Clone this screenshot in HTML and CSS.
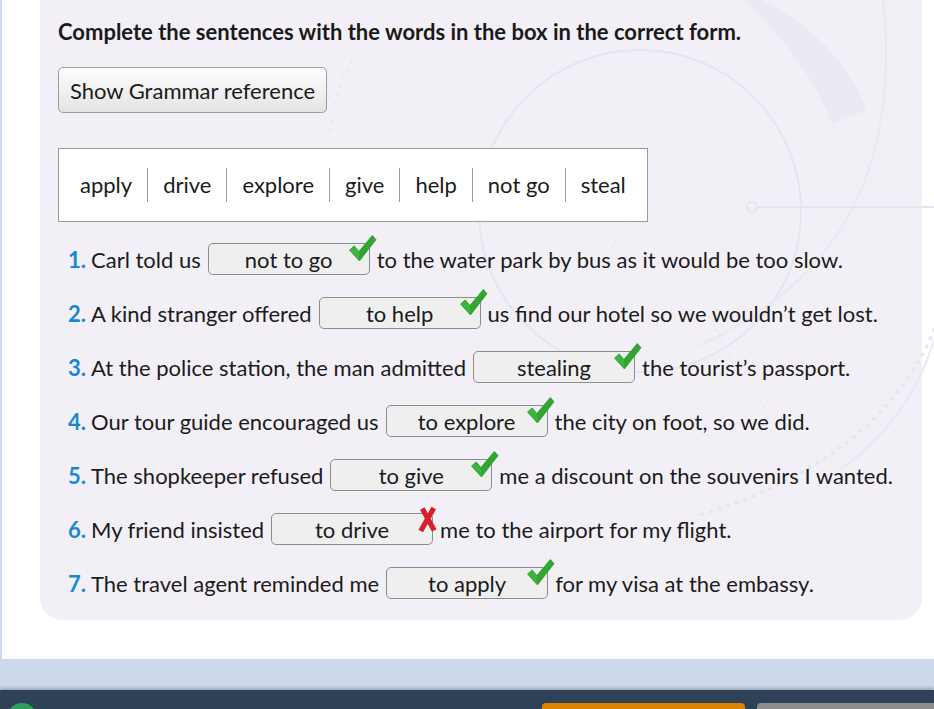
FILE: index.html
```html
<!DOCTYPE html>
<html lang="en">
<head>
<meta charset="utf-8">
<title>Exercise</title>
<link rel="stylesheet" href="styles.css">
</head>
<body>
<div class="page">
  <div class="card">
    <svg class="deco" width="894" height="620" viewBox="0 0 894 620" aria-hidden="true">
      <circle cx="600" cy="211" r="161" fill="none" stroke="#e3e6f2" stroke-width="2"/>
      <path d="M843 0 Q870 250 660 345" fill="none" stroke="#e7e9f4" stroke-width="2"/>
      <path d="M703 0 L722 0 Q800 40 827 110 L792 124 Q768 60 703 0 Z" fill="#eaeaf5"/>
      <line x1="717" y1="207" x2="894" y2="207" stroke="#e1e7f2" stroke-width="2"/>
      <circle cx="712" cy="207" r="5" fill="none" stroke="#e1e7f2" stroke-width="2"/>
      <path d="M570 250 Q585 225 600 205" fill="none" stroke="#e3e6f2" stroke-width="2" stroke-dasharray="0 5" stroke-linecap="round"/>
      <path d="M290 130 Q295 90 315 55" fill="none" stroke="#e6e8f3" stroke-width="3" stroke-dasharray="0 9" stroke-linecap="round"/>
      <path d="M670 317 Q700 380 735 420" fill="none" stroke="#e3e6f2" stroke-width="2" stroke-dasharray="0 5" stroke-linecap="round"/>
      <path d="M894 330 Q840 460 660 515" fill="none" stroke="#e3e6f2" stroke-width="4" stroke-dasharray="0 9" stroke-linecap="round"/>
      <path d="M894 340 Q870 420 800 470" fill="none" stroke="#e8e9f4" stroke-width="2"/>
    </svg>
    <div class="content">
      <h1 class="title">Complete the sentences with the words in the box in the correct form.</h1>
      <button class="grammar-btn" type="button">Show Grammar reference</button>
      <div class="wordbox">
        <span class="word">apply</span>
        <span class="word">drive</span>
        <span class="word">explore</span>
        <span class="word">give</span>
        <span class="word">help</span>
        <span class="word">not go</span>
        <span class="word">steal</span>
      </div>
      <ol class="items">
        <li class="item">
          <span class="num">1.</span><span class="txt">Carl told us</span>
          <span class="answer">not to go<svg class="mark check" viewBox="0 0 28 28" aria-hidden="true"><path d="M1.5 15.5 L6 11.5 L10.5 17 L23.5 1.5 L27 5.5 L11 26 Z" fill="#3cb53c" stroke="#2f9a2f" stroke-width="0.8" stroke-linejoin="round"/><path d="M10.5 17 L23.5 1.5 L27 5.5 L11 26 Z" fill="#33a533"/></svg></span>
          <span class="txt after">to the water park by bus as it would be too slow.</span>
        </li>
        <li class="item">
          <span class="num">2.</span><span class="txt">A kind stranger offered</span>
          <span class="answer">to help<svg class="mark check" viewBox="0 0 28 28" aria-hidden="true"><path d="M1.5 15.5 L6 11.5 L10.5 17 L23.5 1.5 L27 5.5 L11 26 Z" fill="#3cb53c" stroke="#2f9a2f" stroke-width="0.8" stroke-linejoin="round"/><path d="M10.5 17 L23.5 1.5 L27 5.5 L11 26 Z" fill="#33a533"/></svg></span>
          <span class="txt after">us find our hotel so we wouldn’t get lost.</span>
        </li>
        <li class="item">
          <span class="num">3.</span><span class="txt">At the police station, the man admitted</span>
          <span class="answer">stealing<svg class="mark check" viewBox="0 0 28 28" aria-hidden="true"><path d="M1.5 15.5 L6 11.5 L10.5 17 L23.5 1.5 L27 5.5 L11 26 Z" fill="#3cb53c" stroke="#2f9a2f" stroke-width="0.8" stroke-linejoin="round"/><path d="M10.5 17 L23.5 1.5 L27 5.5 L11 26 Z" fill="#33a533"/></svg></span>
          <span class="txt after">the tourist’s passport.</span>
        </li>
        <li class="item">
          <span class="num">4.</span><span class="txt">Our tour guide encouraged us</span>
          <span class="answer">to explore<svg class="mark check" viewBox="0 0 28 28" aria-hidden="true"><path d="M1.5 15.5 L6 11.5 L10.5 17 L23.5 1.5 L27 5.5 L11 26 Z" fill="#3cb53c" stroke="#2f9a2f" stroke-width="0.8" stroke-linejoin="round"/><path d="M10.5 17 L23.5 1.5 L27 5.5 L11 26 Z" fill="#33a533"/></svg></span>
          <span class="txt after">the city on foot, so we did.</span>
        </li>
        <li class="item">
          <span class="num">5.</span><span class="txt">The shopkeeper refused</span>
          <span class="answer">to give<svg class="mark check" viewBox="0 0 28 28" aria-hidden="true"><path d="M1.5 15.5 L6 11.5 L10.5 17 L23.5 1.5 L27 5.5 L11 26 Z" fill="#3cb53c" stroke="#2f9a2f" stroke-width="0.8" stroke-linejoin="round"/><path d="M10.5 17 L23.5 1.5 L27 5.5 L11 26 Z" fill="#33a533"/></svg></span>
          <span class="txt after">me a discount on the souvenirs I wanted.</span>
        </li>
        <li class="item">
          <span class="num">6.</span><span class="txt">My friend insisted</span>
          <span class="answer">to drive<svg class="mark cross" viewBox="0 0 18 26" aria-hidden="true"><path d="M4 2.5 L15.5 23.5 M15 2 L2.5 24" fill="none" stroke="#d8202b" stroke-width="5"/></svg></span>
          <span class="txt after">me to the airport for my flight.</span>
        </li>
        <li class="item">
          <span class="num">7.</span><span class="txt">The travel agent reminded me</span>
          <span class="answer">to apply<svg class="mark check" viewBox="0 0 28 28" aria-hidden="true"><path d="M1.5 15.5 L6 11.5 L10.5 17 L23.5 1.5 L27 5.5 L11 26 Z" fill="#3cb53c" stroke="#2f9a2f" stroke-width="0.8" stroke-linejoin="round"/><path d="M10.5 17 L23.5 1.5 L27 5.5 L11 26 Z" fill="#33a533"/></svg></span>
          <span class="txt after">for my visa at the embassy.</span>
        </li>
      </ol>
    </div>
  </div>
</div>
<div class="band"></div>
<div class="footer">
  <span class="avatar"></span>
  <span class="btn-orange"></span>
  <span class="btn-gray"></span>
</div>
</body>
</html>
```
FILE: styles.css
```css
* { box-sizing: border-box; }

html, body {
  margin: 0;
  padding: 0;
}

body {
  background: #cdd9ea;
  font-family: Lato, "Open Sans", "Liberation Sans", sans-serif;
  color: #1b1b1b;
  height: 709px;
  overflow: hidden;
}

.page {
  margin-left: 2px;
  height: 659px;
  background: #ffffff;
  padding: 0 12px 0 38px;
}

.card {
  position: relative;
  height: 620px;
  background: #f3eff6;
  border-radius: 0 0 22px 22px;
  padding: 19px 0 0 18px;
}

.deco {
  position: absolute;
  left: 0;
  top: 0;
  pointer-events: none;
}

.content {
  position: relative;
}

.title {
  margin: 0;
  font-size: 22px;
  line-height: 26px;
  font-weight: 700;
  color: #1a1a1a;
}

.grammar-btn {
  display: block;
  margin-top: 22px;
  height: 46px;
  width: 269px;
  padding: 0;
  font-family: inherit;
  font-size: 22px;
  color: #1b1b1b;
  background: linear-gradient(#fdfdfd, #e4e4e4);
  border: 1px solid #9c9c9c;
  border-radius: 5px;
}

.wordbox {
  display: inline-flex;
  align-items: center;
  margin-top: 35px;
  height: 74px;
  padding: 0 6px;
  background: #ffffff;
  border: 1px solid #9a9a9a;
}

.word {
  font-size: 22px;
  line-height: 34px;
  padding: 0 15px;
  border-left: 1px solid #9a9a9a;
}

.word:first-child {
  border-left: none;
}

.items {
  list-style: none;
  margin: 10px 0 0;
  padding: 0 0 0 10px;
}

.item {
  display: flex;
  align-items: center;
  height: 54px;
  font-size: 22px;
  white-space: nowrap;
}

.num {
  color: #1889d0;
  font-weight: 700;
  margin-right: 5px;
}

.answer {
  position: relative;
  display: inline-flex;
  align-items: center;
  justify-content: center;
  flex-shrink: 0;
  width: 162px;
  height: 32px;
  margin-left: 7px;
  background: #efefef;
  border: 1px solid #8c8c8c;
  border-radius: 5px;
  color: #1b1b1b;
}

.after {
  margin-left: 7px;
}

.mark {
  position: absolute;
}

.check {
  width: 29px;
  height: 29px;
  left: 139px;
  top: -10px;
}

.cross {
  width: 19px;
  height: 27px;
  left: 146px;
  top: -8px;
}

.band {
  height: 31px;
}

.footer {
  position: relative;
  display: flex;
  align-items: flex-start;
  height: 19px;
  padding-top: 13px;
  background: #2e4157;
  box-shadow: 0 -2px 3px rgba(60, 70, 90, 0.35);
  overflow: hidden;
}

.avatar {
  display: block;
  flex-shrink: 0;
  width: 30px;
  height: 30px;
  margin-left: 7px;
  border-radius: 50%;
  background: #2f9e5c;
}

.btn-orange {
  display: block;
  flex-shrink: 0;
  width: 203px;
  height: 30px;
  margin-left: 505px;
  border-radius: 4px;
  background: #d98300;
}

.btn-gray {
  display: block;
  flex-shrink: 0;
  width: 200px;
  height: 30px;
  margin-left: 12px;
  border-radius: 4px;
  background: #8c8c8c;
}
```
